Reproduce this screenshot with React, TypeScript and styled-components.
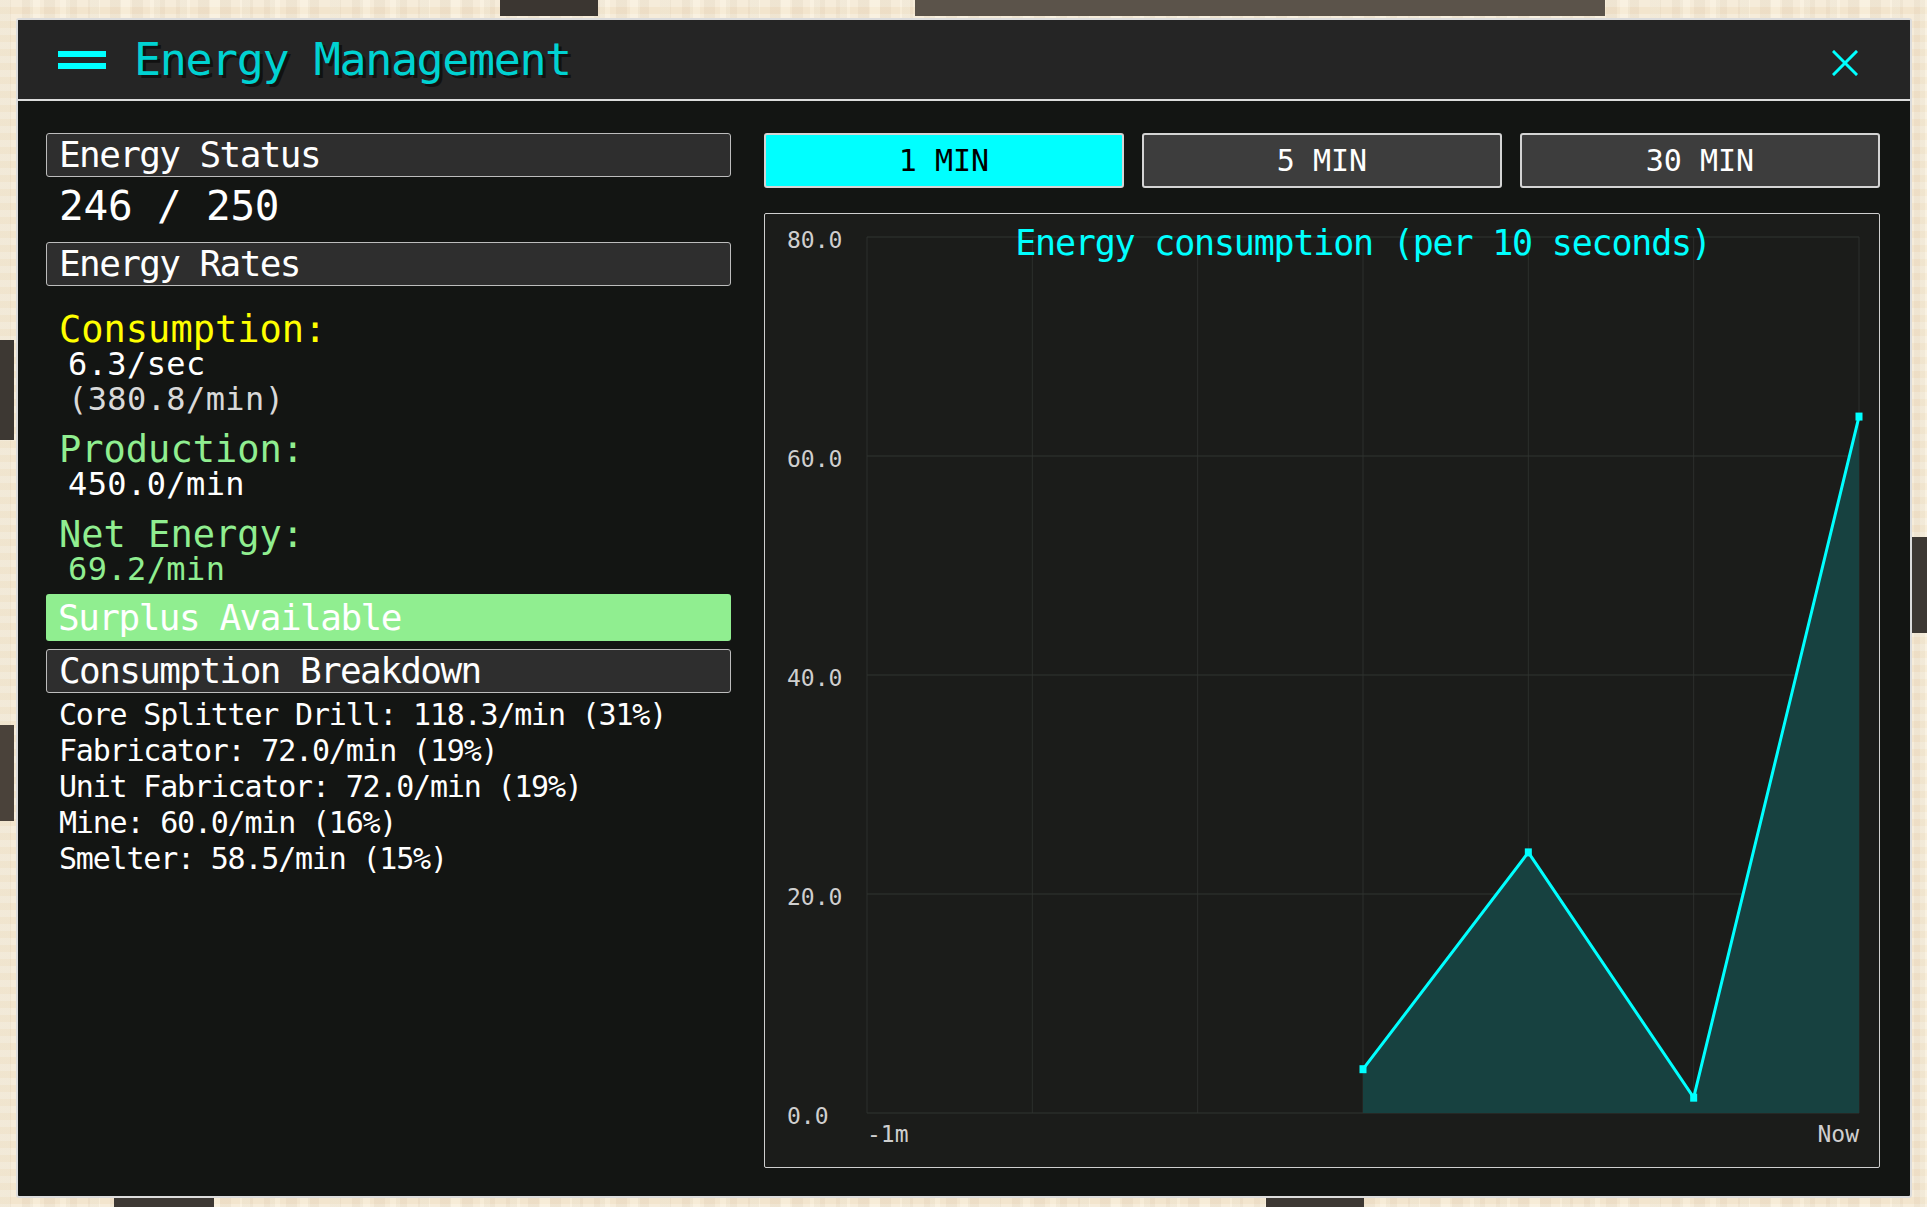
import React from 'react';
import styled, {createGlobalStyle} from "styled-components";

const GlobalStyle = createGlobalStyle`
  html, body {
    margin: 0;
    padding: 0;
  }
  body {
    width: 1927px;
    height: 1207px;
    overflow: hidden;
    background-color: #f3e5cd;
    background-image:
      linear-gradient(90deg, rgba(120, 90, 50, 0.05) 50%, transparent 50%),
      linear-gradient(rgba(255, 255, 255, 0.25) 50%, transparent 50%),
      linear-gradient(90deg, rgba(255, 250, 235, 0.35) 33%, transparent 33%);
    background-size: 22px 22px, 14px 14px, 30px 18px;
    font-family: "DejaVu Sans Mono", "Liberation Mono", monospace;
  }
`

type RateKind = 'consumption' | 'production' | 'net'

interface RateItem {
    kind: RateKind
    label: string
    values: Array<{ text: string, dim?: boolean }>
}

const rates: Array<RateItem> = [
    {kind: 'consumption', label: 'Consumption:', values: [{text: '6.3/sec'}, {text: '(380.8/min)', dim: true}]},
    {kind: 'production', label: 'Production:', values: [{text: '450.0/min'}]},
    {kind: 'net', label: 'Net Energy:', values: [{text: '69.2/min'}]},
]

const breakdown = [
    'Core Splitter Drill: 118.3/min (31%)',
    'Fabricator: 72.0/min (19%)',
    'Unit Fabricator: 72.0/min (19%)',
    'Mine: 60.0/min (16%)',
    'Smelter: 58.5/min (15%)',
]

const ranges = ['1 MIN', '5 MIN', '30 MIN']

// world objects peeking out around the window
const props = [
    {x: 500, y: 0, w: 98, h: 16, c: '#3b3631'},
    {x: 915, y: 0, w: 690, h: 16, c: '#5b534a'},
    {x: 0, y: 340, w: 14, h: 100, c: '#3d3833'},
    {x: 0, y: 725, w: 14, h: 96, c: '#4a423a'},
    {x: 114, y: 1198, w: 100, h: 9, c: '#3d3833'},
    {x: 1266, y: 1198, w: 98, h: 9, c: '#3d3833'},
    {x: 1912, y: 537, w: 15, h: 96, c: '#3d3833'},
]

// chart geometry (inner chart box coordinates)
const W = 1114
const H = 953
const L = 102
const R = 1094
const T = 23
const B = 899
const MAX = 80
const yOf = (v: number) => B - (v / MAX) * (B - T)
const xOf = (i: number) => L + (i * (R - L)) / 6
const samples = [
    {i: 3, v: 4.0},
    {i: 4, v: 23.8},
    {i: 5, v: 1.4},
    {i: 6, v: 63.6},
]

const Chart = () => {
    const pts = samples.map(s => `${xOf(s.i)},${yOf(s.v)}`).join(' ')
    const first = samples[0]
    const last = samples[samples.length - 1]
    const area = `${xOf(first.i)},${B} ${pts} ${xOf(last.i)},${B}`
    return (
        <ChartSvg viewBox={`0 0 ${W} ${H}`}>
            {[0, 1, 2, 3, 4, 5, 6].map(i => (
                <line key={'v' + i} x1={xOf(i)} x2={xOf(i)} y1={T} y2={B} stroke="#2c2f2c" strokeWidth={1}/>
            ))}
            {[0, 20, 40, 60, 80].map(v => (
                <line key={'h' + v} x1={L} x2={R} y1={yOf(v)} y2={yOf(v)} stroke="#303431" strokeWidth={1.2}/>
            ))}
            <polygon points={area} fill="#174140"/>
            <polyline points={pts} fill="none" stroke="#00ffff" strokeWidth={3} strokeLinejoin="miter"/>
            {samples.map(s => (
                <rect key={s.i} x={xOf(s.i) - 3.5} y={yOf(s.v) - 4} width={7} height={8} fill="#00ffff"/>
            ))}
            {[0, 20, 40, 60, 80].map(v => (
                <AxisText key={'l' + v} x={22} y={yOf(v) + 11}>{v.toFixed(1)}</AxisText>
            ))}
            <AxisText x={L} y={928} fontSize={24}>-1m</AxisText>
            <AxisText x={R} y={928} fontSize={24} textAnchor="end">Now</AxisText>
        </ChartSvg>
    )
}

export default function App() {
    return (
        <>
            <GlobalStyle/>
            {props.map((p, k) => (
                <WorldProp key={k} style={{left: p.x, top: p.y, width: p.w, height: p.h, background: p.c}}/>
            ))}
            <Page>
                <Window>
                    <Header>
                        <Burger>
                            <span/>
                            <span/>
                        </Burger>
                        <Title>Energy Management</Title>
                        <CloseButton aria-label="close">
                            <svg width="26" height="26" viewBox="0 0 26 26">
                                <path d="M2 2 L24 24 M24 2 L2 24" stroke="#00ffff" strokeWidth="3" strokeLinecap="square"/>
                            </svg>
                        </CloseButton>
                    </Header>
                    <Body>
                        <LeftColumn>
                            <SectionBox>Energy Status</SectionBox>
                            <BigValue>246 / 250</BigValue>
                            <SectionBox $gap={12}>Energy Rates</SectionBox>
                            {rates.map((r, k) => (
                                <RateGroup key={r.kind} $first={k === 0}>
                                    <RateLabel $kind={r.kind}>{r.label}</RateLabel>
                                    {r.values.map(v => (
                                        <RateValue key={v.text} $kind={r.kind} $dim={v.dim}>{v.text}</RateValue>
                                    ))}
                                </RateGroup>
                            ))}
                            <SurplusBar>Surplus Available</SurplusBar>
                            <SectionBox $gap={8}>Consumption Breakdown</SectionBox>
                            <BreakdownList>
                                {breakdown.map(b => <BreakdownRow key={b}>{b}</BreakdownRow>)}
                            </BreakdownList>
                        </LeftColumn>
                        <RightColumn>
                            <RangeBar>
                                {ranges.map((r, k) => (
                                    <RangeButton key={r} $active={k === 0}>{r}</RangeButton>
                                ))}
                            </RangeBar>
                            <ChartBox>
                                <Chart/>
                                <ChartTitle>Energy consumption (per 10 seconds)</ChartTitle>
                            </ChartBox>
                        </RightColumn>
                    </Body>
                </Window>
            </Page>
        </>
    )
}

const WorldProp = styled.div`
  position: absolute;
  background-image: repeating-linear-gradient(90deg, rgba(0, 0, 0, 0.25) 0 4px, transparent 4px 12px);
`
const Page = styled.div`
  position: relative;
  box-sizing: border-box;
  width: 1927px;
  height: 1207px;
  padding: 18px 15px 9px 16px;
`
const Window = styled.div`
  box-sizing: border-box;
  height: 1180px;
  border: 2px solid #dcdcdc;
  border-radius: 3px;
  background: #131513;
  display: flex;
  flex-direction: column;
  overflow: hidden;
`
const Header = styled.div`
  height: 79px;
  flex-shrink: 0;
  background: #252525;
  border-bottom: 2px solid #dcdcdc;
  display: flex;
  align-items: center;
  padding: 0 52px 0 40px;
`
const Burger = styled.div`
  width: 48px;
  display: flex;
  flex-direction: column;
  gap: 6px;
  margin-right: 28px;
  span {
    display: block;
    height: 6px;
    background: #00ffff;
  }
`
const Title = styled.div`
  flex: 1;
  font-size: 45px;
  line-height: 52px;
  letter-spacing: -1.4px;
  color: #00d2d2;
  text-shadow: 3px 3px 0 #111111;
  white-space: nowrap;
`
const CloseButton = styled.div`
  width: 26px;
  height: 26px;
  margin-top: 6px;
  display: flex;
  cursor: pointer;
`
const Body = styled.div`
  flex: 1;
  display: flex;
  gap: 33px;
  padding: 32px 30px 0 28px;
`
const LeftColumn = styled.div`
  width: 685px;
  flex-shrink: 0;
  display: flex;
  flex-direction: column;
`
const SectionBox = styled.div<{ $gap?: number }>`
  box-sizing: border-box;
  height: 44px;
  margin-top: ${p => p.$gap ?? 0}px;
  border: 1px solid #bdbdbd;
  border-radius: 3px;
  background: #2e2e2e;
  padding-left: 12px;
  font-size: 36px;
  line-height: 42px;
  letter-spacing: -1.6px;
  color: #ffffff;
  white-space: nowrap;
`
const BigValue = styled.div`
  margin-top: 5px;
  padding-left: 13px;
  font-size: 41px;
  line-height: 48px;
  letter-spacing: -0.2px;
  color: #ffffff;
`
const RateGroup = styled.div<{ $first?: boolean }>`
  margin-top: ${p => (p.$first ? 26 : 15)}px;
  display: flex;
  flex-direction: column;
`
const RateLabel = styled.div<{ $kind: RateKind }>`
  padding-left: 13px;
  font-size: 37px;
  line-height: 35px;
  color: ${p => (p.$kind === 'consumption' ? '#ffff00' : '#90ee90')};
`
const RateValue = styled.div<{ $kind: RateKind, $dim?: boolean }>`
  padding-left: 22px;
  font-size: 32px;
  line-height: 35px;
  letter-spacing: 0.4px;
  color: ${p => (p.$kind === 'net' ? '#90ee90' : p.$dim ? '#d9d9d9' : '#ffffff')};
`
const SurplusBar = styled.div`
  margin-top: 7px;
  height: 47px;
  border-radius: 3px;
  background: #90ee90;
  padding-left: 12px;
  font-size: 36px;
  line-height: 47px;
  letter-spacing: -1.5px;
  color: #ffffff;
  white-space: nowrap;
`
const BreakdownList = styled.div`
  margin-top: 4px;
  display: flex;
  flex-direction: column;
`
const BreakdownRow = styled.div`
  padding-left: 13px;
  font-size: 30px;
  line-height: 36px;
  letter-spacing: -1.2px;
  color: #ffffff;
  white-space: nowrap;
`
const RightColumn = styled.div`
  flex: 1;
  display: flex;
  flex-direction: column;
  gap: 25px;
`
const RangeBar = styled.div`
  display: grid;
  grid-template-columns: repeat(3, 1fr);
  gap: 18px;
`
const RangeButton = styled.div<{ $active?: boolean }>`
  box-sizing: border-box;
  height: 55px;
  border: 2px solid #d4d4d4;
  border-radius: 3px;
  background: ${p => (p.$active ? '#00ffff' : '#3d3d3d')};
  color: ${p => (p.$active ? '#000000' : '#ffffff')};
  display: flex;
  align-items: center;
  justify-content: center;
  font-size: 30px;
  letter-spacing: 0px;
  cursor: pointer;
`
const ChartBox = styled.div`
  position: relative;
  box-sizing: border-box;
  height: 955px;
  border: 1px solid #cfcfcf;
  border-radius: 2px;
  background: #1b1c1a;
`
const ChartSvg = styled.svg`
  display: block;
  width: 100%;
  height: 100%;
`
const AxisText = styled.text`
  font-family: "DejaVu Sans Mono", monospace;
  font-size: 23px;
  fill: #cfcfcf;
`
const ChartTitle = styled.div`
  position: absolute;
  top: 9px;
  left: 102px;
  right: 20px;
  text-align: center;
  font-size: 35px;
  line-height: 40px;
  letter-spacing: -1.2px;
  color: #00ffff;
  white-space: nowrap;
`
